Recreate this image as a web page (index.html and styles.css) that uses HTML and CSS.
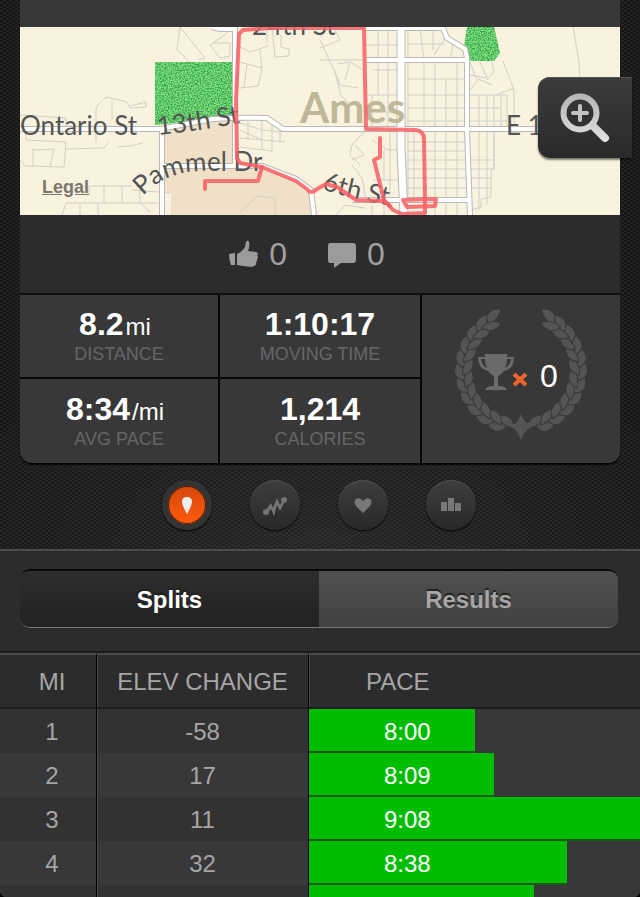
FILE: index.html
```html
<!DOCTYPE html>
<html lang="en">
<head>
<meta charset="utf-8">
<meta name="viewport" content="width=device-width, initial-scale=1">
<title>Run details</title>
<link rel="stylesheet" href="styles.css">
</head>
<body>
<main class="app">
  <div class="overview">
    <section class="panel">
      <div class="map">
        <svg class="map-art" viewBox="20 27 600 188" role="img" aria-label="Route map of Ames">
          <defs>
            <filter id="grain" x="0" y="0" width="100%" height="100%" color-interpolation-filters="sRGB">
              <feTurbulence type="fractalNoise" baseFrequency="0.7" numOctaves="2" seed="4" result="n"/>
              <feColorMatrix in="n" type="matrix" values="0 0 0 0 0.22  0 0 0 0 0.66  0 0 0 0 0.28  0 4 0 0 -1.6" result="c"/>
              <feComposite in="c" in2="SourceGraphic" operator="in" result="g"/>
              <feMerge><feMergeNode in="SourceGraphic"/><feMergeNode in="g"/></feMerge>
            </filter>
            <path id="road-13th" d="M158,135 Q200,131 252,121"/>
            <path id="road-pammel" d="M143,196 C160,177 182,171 205,171 L290,171"/>
            <path id="road-6th" d="M322,189 Q346,198 398,207"/>
            <g id="roads">
              <path d="M20,129 H160 L213,119 Q240,117 267,118 L283,129 H620"/>
              <path d="M162,129 V215"/>
              <path d="M235,27 V164"/>
              <path d="M212,27 L220,29 H235"/>
              <path d="M162,166 H262 L296,179 L311,190 L314,215"/>
              <path d="M366,28 H443 L447,38 L465,49 L467,58 V130 L470,215"/>
              <path d="M366,60 H467"/>
              <path d="M352,200 H470"/>
            </g>
            <path id="avenue" d="M401,27 L401,150 L404,215"/>
          </defs>
          <rect x="20" y="27" width="600" height="188" fill="#f8f2df"/>
          <path fill="#efe0c7" d="M163,129 L213,119 L235,117 V165 L262,166 L300,180 L312,190 L314,215 H171 V193 L163,190Z"/>
          <g filter="url(#grain)" fill="#80de84">
            <path d="M155,62 H235 V117 L213,119 L155,125Z"/>
            <path d="M467,27 H494 L500,53 L494,61 H468 L464,47Z"/>
          </g>
          <g fill="none" stroke="#cfd0c6" stroke-width="1">
            <path d="M180,27 L177,50 L190,62 M180,27 L205,58 L198,60 M210,45 L226,34 L230,27 M210,45 L220,58 L230,56 V43 H213"/>
            <path d="M96,124 V107 L106,97 L127,102 L130,108 L146,107 V102 L130,106 M112,101 V120"/>
            <path d="M20,115 L66,118 V129 M26,130 V140 L66,142 L64,167 L25,166 L20,160 M33,148 V166 M33,150 L54,149 L50,167 M66,149 L104,148 L108,143 M117,147 L130,146 L143,143 M96,130 V142"/>
            <path d="M90,186 H132 M89,186 V195 M104,186 V203 M122,186 V203 M140,187 V203 L150,212 M62,215 L66,203 H158 M80,203 V215 M98,203 V215 M132,190 L170,193"/>
            <path d="M240,47 L250,52 L268,46 M260,50 L262,70 L258,86 L240,88 M247,64 L244,88 M247,64 L262,68 M240,62 L247,64 M267,27 V42 M272,27 L275,57 L289,56 V49 L281,47 V35"/>
            <path d="M240,123 L262,130 L282,132 M248,122 V140 M262,120 V150 M272,121 V152 M240,138 L285,142 M240,147 L272,151 M280,130 V142 M240,130 L262,140"/>
            <path d="M240,212 L258,196 L275,198 V215"/>
            <path d="M320,60 H364 M320,40 L335,72 L341,96 L352,105 M320,48 L340,40 L335,30 M338,64 L350,62 L364,70 M335,72 L340,85 L358,88 M350,62 L345,80 M330,27 L320,37"/>
            <path d="M378,28 V60 M388,28 V60 M366,45 H401 M372,70 H398 M378,62 V95 M388,62 V128 M366,95 H398 M372,95 V128 M366,112 H398 M408,28 V60 M420,28 L424,60 M433,28 V50 M408,44 H445 M445,38 L434,55 M453,45 L450,60"/>
            <path d="M408,63 V195 M424,63 V125 M435,63 V215 M446,80 V215 M457,63 V215 M407,79 H467 M407,95 H507 M407,108 H500 M407,121 H507"/>
            <path d="M414,130 V198 M424,145 V215 M407,142 H467 M407,151 H467 M407,160 H494 M407,169 H494 M407,178 H492 M407,188 H492 M479,95 V210 M487,95 V205 M494,95 V170 M501,95 V128 M507,95 V128 M494,130 V169 L491,170 V197 L481,199 V207 L471,210"/>
            <path d="M470,62 L476,78 L492,85 M480,62 L487,78 L470,75 M492,62 L494,72 L487,80 M503,61 L514,90 V127 M514,88 L496,95 M470,90 L478,80 M573,27 L579,62 L581,103"/>
            <path d="M366,130 L352,145 L350,155 L360,165 M355,145 L364,155 L352,160 M352,165 L362,178 L366,200 M372,140 L388,150 H398 M384,150 V180 M390,130 V195 M372,180 H398 M336,215 L345,205 L365,208 M372,205 V215 M384,205 V215"/>
          </g>
          <use href="#roads" fill="none" stroke="#b9bab6" stroke-width="6"/>
          <use href="#avenue" fill="none" stroke="#b9bab6" stroke-width="9"/>
          <use href="#roads" fill="none" stroke="#fff" stroke-width="4"/>
          <use href="#avenue" fill="none" stroke="#fff" stroke-width="7"/>
          <g class="street">
            <text x="20" y="135">Ontario St</text>
            <text><textPath href="#road-13th">13th St</textPath></text>
            <text><textPath href="#road-pammel">Pammel Dr</textPath></text>
            <text><textPath href="#road-6th">6th St</textPath></text>
            <text x="252" y="35">24th St</text>
            <text x="506" y="135">E 13th St</text>
          </g>
          <text class="city" x="300" y="123">Ames</text>
          <g fill="none" stroke="#f95f64" stroke-opacity=".86" stroke-width="4" stroke-linecap="round" stroke-linejoin="round">
            <path d="M205,189 V181 H258 L262,167 L240,163 L237,158 L236,100 L239,34 L243,30 L270,28 H364 L366,129 L416,130 Q424,131 424,139 L425,200 V213 L402,214 L393,210 L384,200 L374,160 L380,157 V138"/>
            <path d="M262,167 L296,181 L307,189 Q311,195 317,189 L326,184 L337,187 L356,200 L384,201 L390,206"/>
            <path d="M403,200 L436,199 L435,206 L407,207 Z"/>
          </g>
        </svg>
        <a class="legal" href="#legal">Legal</a>
        <button class="map-zoom" type="button" aria-label="Zoom map">
          <svg viewBox="0 0 50 50" width="50" height="50" aria-hidden="true">
            <defs><linearGradient id="steel" x1="0" y1="0" x2="0" y2="50" gradientUnits="userSpaceOnUse"><stop offset="0" stop-color="#b4b4b4"/><stop offset="1" stop-color="#e2e2e2"/></linearGradient></defs>
            <g fill="none" stroke="url(#steel)">
              <circle cx="20" cy="20" r="16.500" stroke-width="6"/>
              <path d="M33,33 L45,45" stroke-width="8" stroke-linecap="round"/>
              <path d="M20,13 V27 M13,20 H27" stroke="#c4c4c4" stroke-width="4" stroke-linecap="round"/>
            </g>
          </svg>
        </button>
      </div>

      <div class="social">
        <button class="social-item" type="button" aria-label="Kudos">
          <svg viewBox="0 0 30 28" width="30" height="28" aria-hidden="true"><path fill="#9b9b9b" d="M0,14 L6,13 V25 L2,25 Q0,20 0,14Z M8,14 Q13,12 16,7 L17,2 Q19,-1 20,2 Q21,6 19,11 L27,12 Q30,13 28,15 Q30,17 28,19 Q29,21 27,22 Q28,25 25,26 L23,27 L14,26 L8,25Z"/></svg>
          <span>0</span>
        </button>
        <button class="social-item" type="button" aria-label="Comments">
          <svg viewBox="0 0 30 28" width="30" height="28" aria-hidden="true"><path fill="#9b9b9b" d="M3,3 H26 Q29,3 29,6 V20 Q29,23 26,23 H14 L7,28 V23 H3 Q1,23 1,20 V6 Q1,3 3,3Z"/></svg>
          <span>0</span>
        </button>
      </div>

      <div class="stats">
        <div class="stat"><p class="value">8.2<small>mi</small></p><p class="label">DISTANCE</p></div>
        <div class="stat"><p class="value">1:10:17</p><p class="label">MOVING TIME</p></div>
        <div class="stat"><p class="value">8:34<small>/mi</small></p><p class="label">AVG PACE</p></div>
        <div class="stat"><p class="value">1,214</p><p class="label">CALORIES</p></div>
        <div class="awards">
          <svg class="wreath" viewBox="-67 -63 134 134" width="134" height="134" aria-hidden="true">
            <defs>
              <g id="leaves">
                <path d="M-56,6 C-67,3 -69,-4 -63,-13 C-56,-7 -54,-1 -56,6Z"/>
                <path d="M-57,13 C-59,4 -57,-2 -50,-6 C-46,4 -49,10 -57,13Z"/>
              </g>
              <g id="branch">
                <use href="#leaves" transform="rotate(-70)"/>
                <use href="#leaves" transform="rotate(-57)"/>
                <use href="#leaves" transform="rotate(-44)"/>
                <use href="#leaves" transform="rotate(-31)"/>
                <use href="#leaves" transform="rotate(-18)"/>
                <use href="#leaves" transform="rotate(-5)"/>
                <use href="#leaves" transform="rotate(8)"/>
                <use href="#leaves" transform="rotate(21)"/>
                <use href="#leaves" transform="rotate(34)"/>
                <use href="#leaves" transform="rotate(47)"/>
                <use href="#leaves" transform="rotate(60)"/>
              </g>
            </defs>
            <g fill="#545454" stroke="#383838" stroke-width="1">
              <use href="#branch"/>
              <use href="#branch" transform="scale(-1 1)"/>
              <path stroke="none" d="M0,44 Q2,50 6,53 Q12,52 18,47 Q14,56 7,59 Q2,64 0,70 Q-2,64 -6,59 Q-14,56 -18,48 Q-12,53 -6,54 Q-2,50 0,44Z"/>
            </g>
          </svg>
          <div class="award-count">
            <svg viewBox="0 0 50 44" width="50" height="44" aria-hidden="true">
              <path fill="#6b6b6b" d="M7,0 H29 V3 H36 Q36,15 26,17 Q23,21 20,22 V32 Q28,32 29,36 H7 Q8,32 16,32 V22 Q13,21 10,17 Q0,15 0,3 H7Z M3,5 Q4,12 9,14 Q7,10 7,5Z M33,5 H29 Q29,10 27,14 Q32,12 33,5Z"/>
              <path d="M36,20 L48,31 M48,20 L36,31" stroke="#f0642d" stroke-width="4" fill="none"/>
            </svg>
            <span>0</span>
          </div>
        </div>
      </div>
    </section>

    <nav class="views" aria-label="Views">
      <button class="view is-active" type="button" aria-label="Map">
        <svg viewBox="0 0 24 24" width="24" height="24" aria-hidden="true"><path fill="#eee" d="M12,4 Q17,4 17,9 Q17,12 12,21 Q7,12 7,9 Q7,4 12,4Z"/></svg>
      </button>
      <button class="view" type="button" aria-label="Analysis">
        <svg viewBox="0 0 24 24" width="24" height="24" aria-hidden="true"><path fill="#747474" d="M2,18 L8,10 L10,15 L14,5 L17,12 L21,6 L22,8 L17,18 L14,12 L11,23 L8,16 L4,21Z"/><circle cx="3" cy="19" r="3" fill="#747474"/><circle cx="21" cy="7" r="3" fill="#747474"/></svg>
      </button>
      <button class="view" type="button" aria-label="Heart rate">
        <svg viewBox="0 0 24 24" width="24" height="24" aria-hidden="true"><path fill="#777" d="M12,20 L5,13 Q2,9 5,6 Q9,4 12,8 Q15,4 19,6 Q22,9 19,13Z"/></svg>
      </button>
      <button class="view" type="button" aria-label="Charts">
        <svg viewBox="0 0 24 24" width="24" height="24" aria-hidden="true"><path fill="#777" d="M2,9 H8 V18 H2Z M9,5 H15 V18 H9Z M16,10 H22 V18 H16Z"/></svg>
      </button>
    </nav>
  </div>

  <section class="details">
    <div class="segments">
      <button class="segment is-active" type="button">Splits</button>
      <button class="segment" type="button">Results</button>
    </div>
    <table class="splits">
      <thead>
        <tr><th class="mi" scope="col">MI</th><th class="elev" scope="col">ELEV CHANGE</th><th class="pace" scope="col">PACE</th></tr>
      </thead>
      <tbody>
        <tr><td class="mi">1</td><td class="elev">-58</td><td class="pace"><div class="bar" style="width:50%">8:00</div></td></tr>
        <tr><td class="mi">2</td><td class="elev">17</td><td class="pace"><div class="bar" style="width:56%">8:09</div></td></tr>
        <tr><td class="mi">3</td><td class="elev">11</td><td class="pace"><div class="bar" style="width:100%">9:08</div></td></tr>
        <tr><td class="mi">4</td><td class="elev">32</td><td class="pace"><div class="bar" style="width:78%">8:38</div></td></tr>
        <tr><td class="mi"></td><td class="elev"></td><td class="pace"><div class="bar" style="width:68%"></div></td></tr>
      </tbody>
    </table>
  </section>
</main>
</body>
</html>
```

FILE: styles.css
```css
* { box-sizing: border-box; }

body {
  margin: 0;
  background: #000;
  font-family: "Liberation Sans", Arial, sans-serif;
  color: #fff;
}

button {
  margin: 0;
  padding: 0;
  border: 0;
  background: none;
  color: inherit;
  font: inherit;
}

p { margin: 0; }
svg { display: block; }

.app {
  height: 100vh;
  overflow: hidden;
  border-radius: 0 0 6px 6px;
  background: #2c2c2c;
}

/* Woven carbon backdrop */
.overview {
  padding: 0 20px;
  background:
    radial-gradient(ellipse 60% 40% at 50% 100%, rgba(255, 255, 255, .06), transparent),
    conic-gradient(#242424 25%, #161616 0 50%, #242424 0 75%, #161616 0) 0 0 / 6px 4px;
}

.panel {
  padding-top: 27px;
  border-radius: 0 0 12px 12px;
  background: #383838;
  box-shadow: 0 2px 1px #070707;
}

.map { position: relative; }
.map-art { width: 100%; height: auto; }

.street {
  font-family: Lato, sans-serif;
  font-size: 26px;
  fill: #555;
}

.city {
  font-family: Lato, sans-serif;
  font-size: 42px;
  font-weight: 700;
  fill: #bfb798;
}

.legal {
  position: absolute;
  left: 22px;
  bottom: 18px;
  color: #7b776c;
  font-size: 18px;
  font-weight: 700;
  line-height: 20px;
}

.map-zoom {
  position: absolute;
  top: 50px;
  right: -12px;
  display: grid;
  place-items: center;
  width: 94px;
  height: 81px;
  border-radius: 12px 0 0 12px;
  background: linear-gradient(#3c3c3c, #292929);
  box-shadow: 0 2px 2px rgba(0, 0, 0, .5), inset 0 1px #555;
}

.social {
  display: flex;
  justify-content: center;
  gap: 40px;
  height: 80px;
  padding-right: 26px;
  border-bottom: 2px solid #101010;
  background: #2c2c2c;
}

.social-item {
  display: flex;
  align-items: center;
  gap: 10px;
  color: #a0a0a0;
  font-size: 32px;
}

.stats {
  display: grid;
  grid-template-columns: 99fr 100fr 99fr;
  grid-template-rows: 82px 84px;
  gap: 2px;
  overflow: hidden;
  border-radius: 0 0 12px 12px;
  background: #070707;
}

.stat {
  display: grid;
  align-content: center;
  background: #383838;
  text-align: center;
}

.value {
  height: 36px;
  font-size: 32px;
  font-weight: 700;
  line-height: 36px;
}

.value small {
  margin: 0 8px 0 2px;
  font-size: 24px;
  font-weight: 400;
  line-height: 24px;
}

.label {
  color: #666;
  font-size: 18px;
  line-height: 24px;
}

.awards {
  display: grid;
  grid-column: 3;
  grid-row: 1 / 3;
  place-items: center;
  padding-bottom: 10px;
  background: #383838;
}

.wreath, .award-count { grid-area: 1 / 1; }

.award-count {
  display: flex;
  align-items: center;
  gap: 12px;
  padding: 4px 6px 0 0;
  font-size: 32px;
}

.views {
  display: flex;
  justify-content: center;
  gap: 38px;
  padding: 17px 2px 19px 0;
}

.view {
  display: grid;
  place-items: center;
  width: 50px;
  height: 50px;
  border-radius: 50%;
  background: linear-gradient(#3e3e3e, #282828);
  box-shadow: inset 0 1px #505050, 0 1px 2px #000;
}

.view.is-active {
  border: 6px solid #333;
  background: linear-gradient(#d4490c, #ff5a0c);
  box-shadow: inset 0 0 0 1px #4c1a06, 0 1px 2px #000;
}

.details {
  border-top: 2px solid #4b4b4b;
  background: #2c2c2c;
}

.segments {
  display: flex;
  height: 59px;
  margin: 18px 22px 23px 20px;
  overflow: hidden;
  border-top: 2px solid #080808;
  border-bottom: 1px solid #777;
  border-radius: 10px;
}

.segment {
  flex: 1;
  padding-top: 2px;
  background: linear-gradient(#505050, #414141);
  color: #a6a6a6;
  font-size: 24px;
  font-weight: 700;
  text-shadow: 0 -2px 1px #222;
}

.segment.is-active {
  background: linear-gradient(#2d2d2d, #222);
  color: #fff;
}

.splits {
  width: 100%;
  border-spacing: 0;
  table-layout: fixed;
  border-top: 2px solid #1c1c1c;
  color: #a6a6a6;
  font-size: 24px;
}

.splits th {
  height: 56px;
  padding: 2px 0 0;
  border-top: 2px solid #4b4b4b;
  border-bottom: 2px solid #1e1e1e;
  font-weight: 400;
}

.splits td {
  height: 44px;
  padding: 2px 0 0;
  background: #383838;
  text-align: center;
}

.splits td.pace { padding: 0; }

.splits tbody tr:nth-child(odd) td:not(.pace) { background: #323232; }

.splits .mi {
  width: 97px;
  padding-left: 8px;
  border-right: 1px solid #000;
}

.splits .elev {
  width: 212px;
  border-right: 1px solid #000;
  box-shadow: inset 1px 0 #4b4b4b;
}

.splits th.pace {
  padding-left: 57px;
  box-shadow: inset 1px 0 #4b4b4b;
  text-align: left;
}

.bar {
  height: 44px;
  padding-left: 75px;
  border-bottom: 2px solid #145c12;
  background: #00bd00;
  color: #fff;
  line-height: 46px;
  text-align: left;
}
```
